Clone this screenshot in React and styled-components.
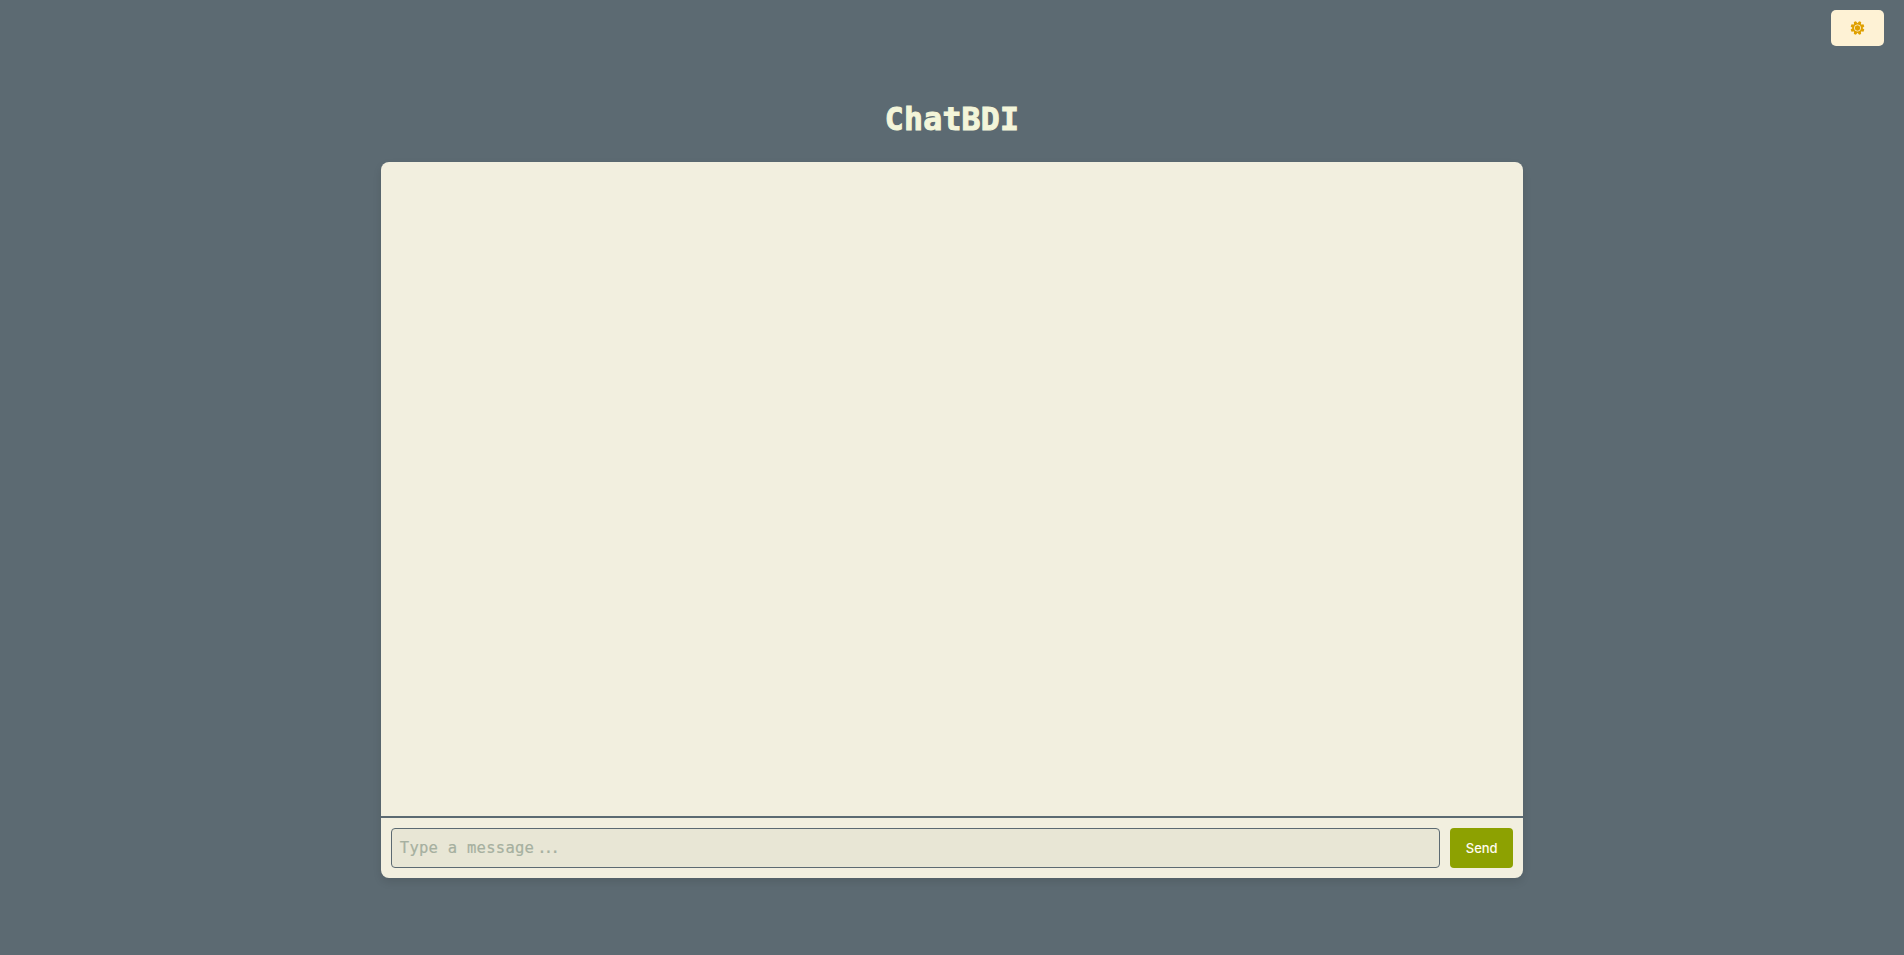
import React, { useState } from 'react';
import styled, { createGlobalStyle } from 'styled-components';

const GlobalStyle = createGlobalStyle`
  * { box-sizing: border-box; }
  body {
    margin: 0;
    background: #5c6a72;
    overflow: hidden;
    font-family: Inter, 'Liberation Sans', sans-serif;
  }
`;

const Page = styled.div`
  display: flex;
  flex-direction: column;
  align-items: center;
  height: 100vh;
`;

const TopBar = styled.header`
  display: flex;
  justify-content: flex-end;
  width: 100%;
  height: 46px;
  padding: 10px 20px 0 0;
`;

const ThemeButton = styled.button`
  display: flex;
  align-items: center;
  justify-content: center;
  width: 53px;
  height: 36px;
  padding: 0;
  border: 0;
  border-radius: 5px;
  background: #fef2d5;
  color: #dfa000;
`;

const Title = styled.h1`
  margin: 50px 0 20px;
  height: 46px;
  font: 700 31.5px/46px 'DejaVu Sans Mono', monospace;
  letter-spacing: 0.24px;
  -webkit-text-stroke: 1px #f3f5d9;
  color: #f3f5d9;
`;

const ChatCard = styled.main`
  display: flex;
  flex-direction: column;
  width: 60%;
  height: 716.25px;
  border-radius: 8px;
  background: #f2efdf;
  box-shadow: 0 4px 8px rgba(0, 0, 0, 0.1);
  overflow: hidden;
`;

const Messages = styled.section`
  flex: 1;
`;

const Composer = styled.form`
  display: flex;
  gap: 10px;
  padding: 10px;
  border-top: 2px solid #5c6a72;
`;

const Field = styled.label`
  position: relative;
  flex: 1;
  height: 40px;
`;

const Input = styled.input`
  width: 100%;
  height: 100%;
  padding: 0 8px;
  border: 1px solid #5c6a72;
  border-radius: 4px;
  outline: none;
  background: #e8e6d5;
  color: #5c6a72;
  font: 16px 'DejaVu Sans Mono', monospace;
`;

const Placeholder = styled.span`
  position: absolute;
  left: 9px;
  top: 0;
  line-height: 40px;
  font-family: 'DejaVu Sans Mono', monospace;
  font-size: 15.5px;
  letter-spacing: 0.27px;
  color: #a6b0a0;
  -webkit-text-stroke: 0.2px #a6b0a0;
  pointer-events: none;
  white-space: pre;
`;

const Dots = styled.span`
  margin-left: 3px;
  letter-spacing: -2.7px;
`;

const SendButton = styled.button`
  width: 63px;
  height: 40px;
  padding: 0;
  border: 0;
  border-radius: 4px;
  background: #8da101;
  color: #fffbef;
  font: 500 13px Inter, sans-serif;
`;

function SunIcon() {
  return (
    <svg width="15" height="14" viewBox="-7.5 -7 15 14" fill="currentColor">
      {[0, 45, 90, 135, 180, 225, 270, 315].map((angle) => (
        <path key={angle} transform={`rotate(${angle + 22.5})`} d="M4-1.9 6.9-1.1V1.1L4 1.9Z" />
      ))}
      <circle r="5" />
      <circle r="3.15" fill="none" stroke="#fef2d5" strokeWidth="0.8" />
    </svg>
  );
}

export default function App() {
  const [message, setMessage] = useState('');
  return (
    <Page>
      <GlobalStyle />
      <TopBar>
        <ThemeButton aria-label="Toggle theme"><SunIcon /></ThemeButton>
      </TopBar>
      <Title>ChatBDI</Title>
      <ChatCard>
        <Messages />
        <Composer onSubmit={(event) => { event.preventDefault(); setMessage(''); }}>
          <Field>
            <Input value={message} onChange={(event) => setMessage(event.target.value)} />
            {!message && <Placeholder>Type a message<Dots>...</Dots></Placeholder>}
          </Field>
          <SendButton type="submit">Send</SendButton>
        </Composer>
      </ChatCard>
    </Page>
  );
}
